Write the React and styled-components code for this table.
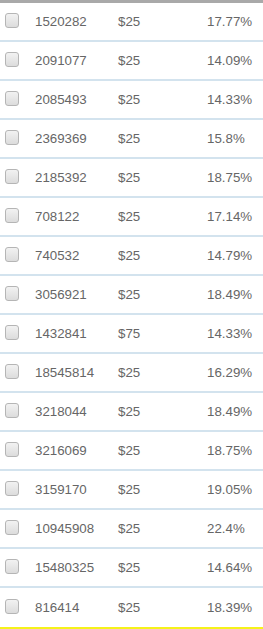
import React from 'react'
import styled, { createGlobalStyle } from 'styled-components'

const Global = createGlobalStyle`
  body {
    margin: 0;
    background: #fff;
    font-family: "Liberation Sans", Arial, sans-serif;
  }
`

const List = styled.div`
  width: 263px;
  border-top: 3px solid #a9a9a9;
  border-bottom: 2px solid #f5f21a;
`

const Row = styled.div`
  display: grid;
  grid-template-columns: 30px 83px 89px 1fr;
  align-items: center;
  height: ${p => (p.last ? 39 : 37)}px;
  padding: 0 0 0 5px;
  border-bottom: ${p => (p.last ? 'none' : '2px solid #d3e3ee')};
  font-size: 13.3px;
  color: #666;
`

const Check = styled.span`
  width: 12px;
  height: 13px;
  border: 1px solid #b5b5b5;
  border-radius: 3px;
  background: linear-gradient(#f2f2f2, #dcdcdc);
  margin-top: -3px;
`

const Cell = styled.span`
  margin-top: -1px;
  white-space: nowrap;
`

const rows = [
  ['1520282', '$25', '17.77%'],
  ['2091077', '$25', '14.09%'],
  ['2085493', '$25', '14.33%'],
  ['2369369', '$25', '15.8%'],
  ['2185392', '$25', '18.75%'],
  ['708122', '$25', '17.14%'],
  ['740532', '$25', '14.79%'],
  ['3056921', '$25', '18.49%'],
  ['1432841', '$75', '14.33%'],
  ['18545814', '$25', '16.29%'],
  ['3218044', '$25', '18.49%'],
  ['3216069', '$25', '18.75%'],
  ['3159170', '$25', '19.05%'],
  ['10945908', '$25', '22.4%'],
  ['15480325', '$25', '14.64%'],
  ['816414', '$25', '18.39%'],
]

export default function App() {
  return (
    <>
      <Global />
      <List>
        {rows.map(([id, amt, pct], i) => (
          <Row key={id} last={i === rows.length - 1}>
            <Check />
            <Cell>{id}</Cell>
            <Cell>{amt}</Cell>
            <Cell>{pct}</Cell>
          </Row>
        ))}
      </List>
    </>
  )
}
